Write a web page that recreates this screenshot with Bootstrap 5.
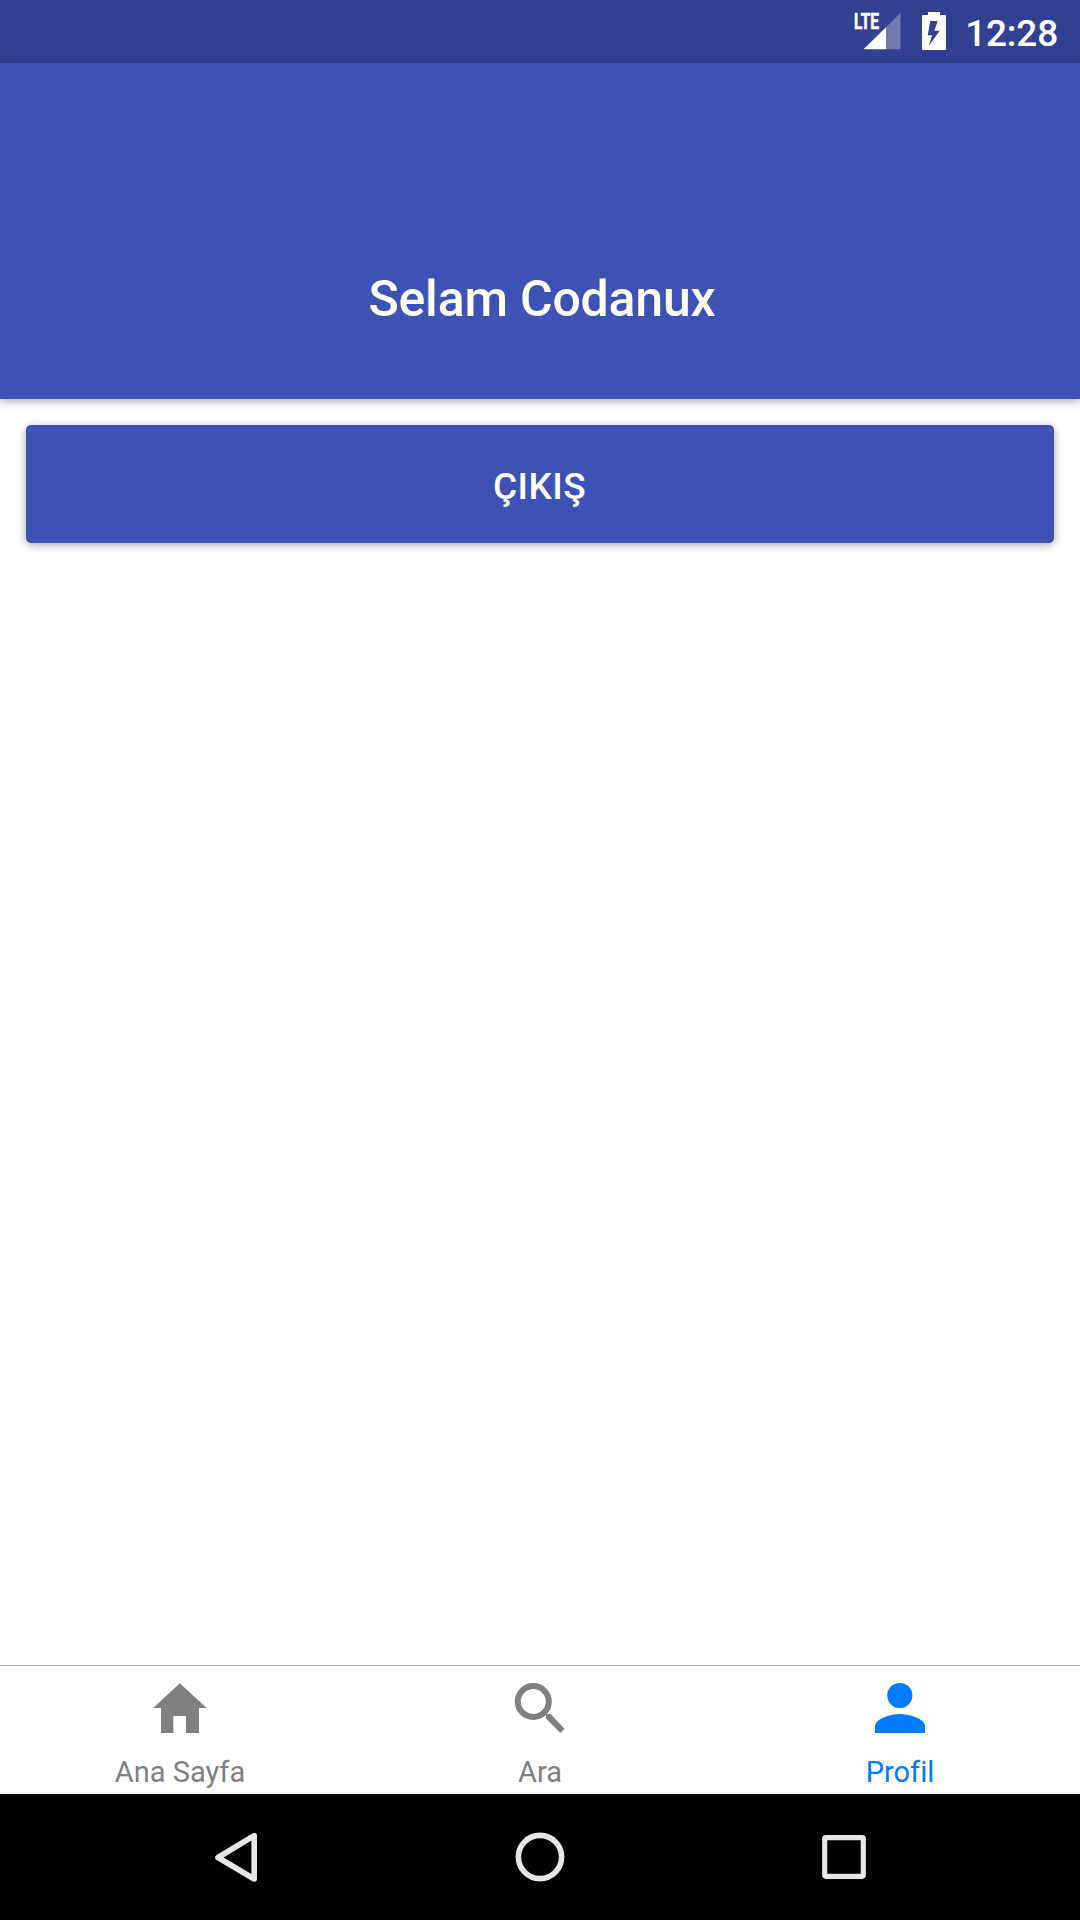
<!DOCTYPE html>
<html lang="tr">
<head>
<meta charset="utf-8">
<meta name="viewport" content="width=device-width, initial-scale=1">
<title>Profil</title>
<link rel="stylesheet" href="https://cdn.jsdelivr.net/npm/bootstrap@5.3.0/dist/css/bootstrap.min.css">
<style>
body{font-family:Roboto,"Noto Sans",sans-serif;height:1920px;background:#fff;overflow:hidden}
svg{display:block;flex:none}
.status-bar{height:63px;background:#334091;padding-right:22px}
.status-icons{margin-right:17px}
.lte-label{font:700 22px Roboto,sans-serif;stroke:#fff;stroke-width:.6px}
.clock{font-size:37px;font-weight:500;line-height:59px;padding-top:4px;letter-spacing:-.2px}
.hero{height:336px;background:#3f51b5;box-shadow:0 3px 8px rgba(0,0,0,.3);padding:0 0 71px 4px}
.hero h1{font-size:50px;line-height:58px;font-weight:500;letter-spacing:-.2px}
.main-area{padding:26px}
.exit-btn{height:118px;background:#3f51b5;color:#fff;border:0;border-radius:5px;font-size:37px;font-weight:500;letter-spacing:.4px;padding:10px 1px 4px 0;box-shadow:0 2px 8px rgba(0,0,0,.35)}
.tab-bar{height:129px;border-top:1px solid #adadad;font-size:29px}
.tab-item{color:#808080;padding-top:12px;line-height:34px}
.tab-item.active{color:#007aff}
.tab-item svg{fill:currentColor;margin-bottom:17px}
.system-nav{height:126px;background:#000;gap:244px}
.system-nav svg{fill:none;stroke:#e6e6e6;stroke-width:5.6;stroke-linejoin:round}
</style>
</head>
<body class="d-flex flex-column">
<header class="status-bar d-flex justify-content-end align-items-center text-white">
<svg class="status-icons" width="96" height="63" viewBox="852 0 96 63" fill="#fff">
<text class="lte-label" x="854" y="29" textLength="25" lengthAdjust="spacingAndGlyphs">LTE</text>
<path d="M886 27.3 900.5 12.8V49.3H886z" opacity=".3"/>
<path d="M886 27.3V49.3H863.5z"/>
<path fill-rule="evenodd" d="M928 12h12v3h5a1 1 0 0 1 1 1v33a1 1 0 0 1-1 1h-22a1 1 0 0 1-1-1V16a1 1 0 0 1 1-1h5zM930.3 21 927.7 35.2H932L928.7 46 939.7 30.7H934.3L937.7 21z"/>
</svg>
<span class="clock">12:28</span>
</header>
<section class="hero d-flex justify-content-center align-items-end text-white"><h1 class="m-0">Selam Codanux</h1></section>
<main class="main-area flex-grow-1"><button class="btn exit-btn w-100" type="button">ÇIKIŞ</button></main>
<nav class="tab-bar row g-0 text-center">
<a class="tab-item col d-flex flex-column align-items-center text-decoration-none"><svg width="60" height="60" viewBox="0 0 60 60"><path d="M29.8 5.2 56.7 30H49V55H36V38H23.3V55H11V30H3.2z"/></svg>Ana Sayfa</a>
<a class="tab-item col d-flex flex-column align-items-center text-decoration-none"><svg width="60" height="60" viewBox="0 0 60 60"><circle cx="23.3" cy="23.5" r="15.5" fill="none" stroke="currentColor" stroke-width="6"/><path d="M34 33.5 36.5 36H40.5L54.5 50.8 50.4 54.9 36 40.5V37L33 34.5z"/></svg>Ara</a>
<a class="tab-item active col d-flex flex-column align-items-center text-decoration-none"><svg width="60" height="60" viewBox="0 0 60 60"><circle cx="29.8" cy="17.5" r="12.6"/><path d="M5 55V48.5C5 40.3 21.5 36 30 36s25 4.3 25 12.5V55z"/></svg>Profil</a>
</nav>
<footer class="system-nav d-flex justify-content-center align-items-center">
<svg width="60" height="60" viewBox="0 0 60 60"><path d="M12 30.5 48.2 8.6V52z"/></svg>
<svg width="60" height="60" viewBox="0 0 60 60"><circle cx="30" cy="30" r="21.6"/></svg>
<svg width="60" height="60" viewBox="0 0 60 60"><rect x="10.7" y="10.7" width="38.6" height="38.6" stroke-width="5.2" rx="1.2"/></svg>
</footer>
<script src="https://cdn.jsdelivr.net/npm/bootstrap@5.3.0/dist/js/bootstrap.bundle.min.js"></script>
</body>
</html>
